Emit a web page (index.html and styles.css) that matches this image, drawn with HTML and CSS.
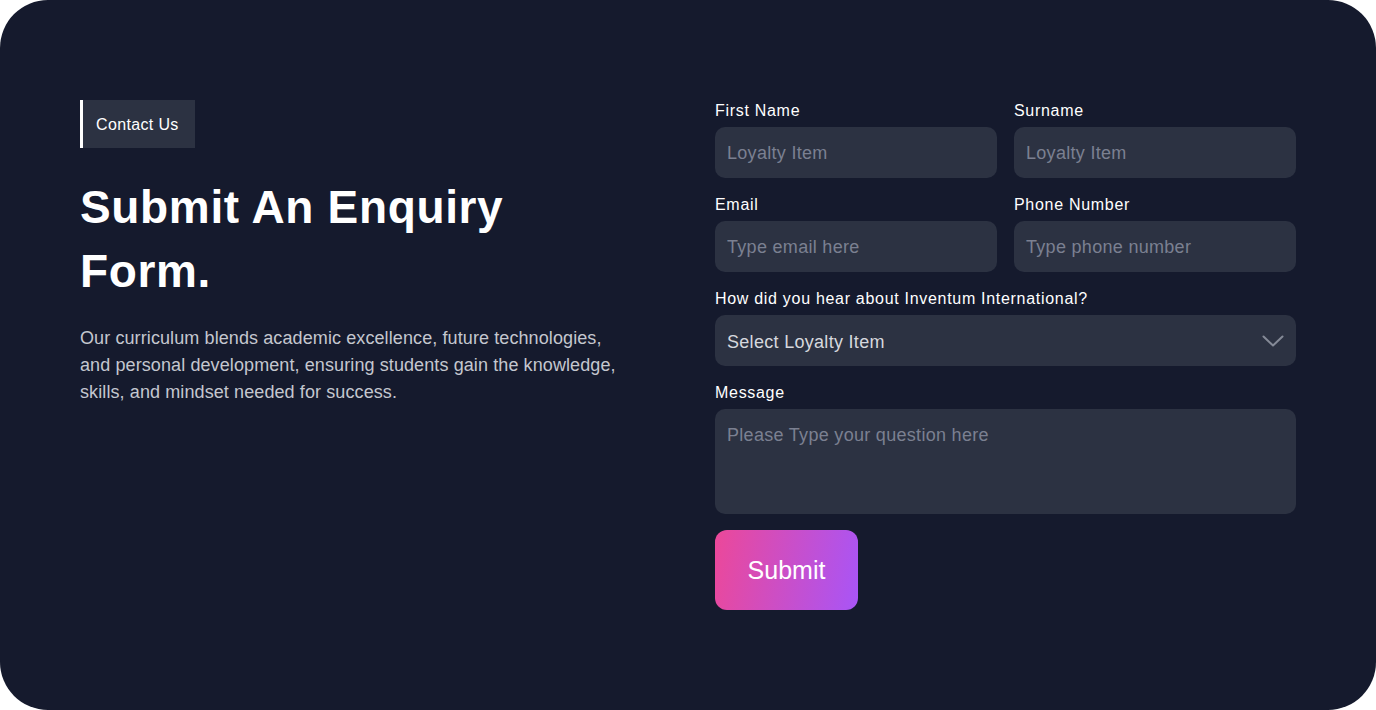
FILE: index.html
```html
<!DOCTYPE html>
<html lang="en">
<head>
<meta charset="utf-8">
<title>Contact Us</title>
<link rel="stylesheet" href="styles.css">
</head>
<body>
<section class="card">
  <div class="intro">
    <div class="badge">Contact Us</div>
    <h1 class="title">Submit An Enquiry Form.</h1>
    <p class="lead">Our curriculum blends academic excellence, future technologies, and personal development, ensuring students gain the knowledge, skills, and mindset needed for success.</p>
  </div>
  <form class="form">
    <div class="row two">
      <label class="field">
        <span class="label">First Name</span>
        <input class="control" type="text" placeholder="Loyalty Item">
      </label>
      <label class="field">
        <span class="label">Surname</span>
        <input class="control" type="text" placeholder="Loyalty Item">
      </label>
    </div>
    <div class="row two">
      <label class="field">
        <span class="label">Email</span>
        <input class="control" type="email" placeholder="Type email here">
      </label>
      <label class="field">
        <span class="label">Phone Number</span>
        <input class="control" type="tel" placeholder="Type phone number">
      </label>
    </div>
    <label class="field">
      <span class="label">How did you hear about Inventum International?</span>
      <span class="select-wrap">
        <select class="control select">
          <option>Select Loyalty Item</option>
        </select>
        <svg class="chevron" width="22" height="12" viewBox="0 0 22 12" aria-hidden="true"><path d="M1.5 1.5 L11 10.5 L20.5 1.5" fill="none" stroke="#858a97" stroke-width="2" stroke-linecap="round" stroke-linejoin="round"/></svg>
      </span>
    </label>
    <label class="field">
      <span class="label">Message</span>
      <textarea class="control textarea" placeholder="Please Type your question here"></textarea>
    </label>
    <div class="actions">
      <button class="submit" type="button">Submit</button>
    </div>
  </form>
</section>
</body>
</html>
```
FILE: styles.css
```css
* { box-sizing: border-box; }
html, body { margin: 0; padding: 0; background: #ffffff; }
body { font-family: "Liberation Sans", Arial, sans-serif; }

.card {
  width: 1376px;
  height: 710px;
  background: #151a2d;
  border-radius: 48px;
  padding: 100px 80px 0 80px;
  display: flex;
  gap: 80px;
}

.intro { flex: 1; min-width: 0; }

.badge {
  display: inline-flex;
  align-items: center;
  height: 48px;
  padding: 1px 16px 0 13px;
  border-left: 3px solid #ffffff;
  background: #2c3242;
  color: #ffffff;
  font-size: 16px;
  letter-spacing: 0.35px;
}

.title {
  margin: 27px 0 0 0;
  color: #ffffff;
  font-size: 46px;
  line-height: 64px;
  font-weight: 700;
  letter-spacing: 0.65px;
}

.lead {
  margin: 22px 0 0 0;
  color: #c4c7cf;
  font-size: 18px;
  line-height: 27px;
  letter-spacing: 0.1px;
}

.form {
  width: 581px;
  flex: none;
  display: flex;
  flex-direction: column;
  gap: 16px;
}

.row.two {
  display: grid;
  grid-template-columns: 1fr 1fr;
  gap: 17px;
}

.field {
  display: flex;
  flex-direction: column;
  gap: 6px;
}

.label {
  color: #ffffff;
  font-size: 16px;
  line-height: 20px;
  padding-top: 1px;
  letter-spacing: 0.7px;
}

.control {
  height: 51px;
  width: 100%;
  border: none;
  outline: none;
  border-radius: 10px;
  background: #2c3242;
  padding: 2px 12px 0 12px;
  font-family: "Liberation Sans", Arial, sans-serif;
  font-size: 18px;
  letter-spacing: 0.3px;
  color: #d6d8de;
}

.control::placeholder { color: #7b8091; opacity: 1; }

.select-wrap { position: relative; display: block; }

.select {
  appearance: none;
  -webkit-appearance: none;
  color: #d6d8de;
}

.chevron {
  position: absolute;
  right: 12px;
  top: 20px;
  pointer-events: none;
}

.textarea {
  height: 105px;
  padding: 16px 12px;
  resize: none;
  line-height: 20px;
}

.actions { display: flex; }

.submit {
  width: 143px;
  height: 80px;
  border: none;
  border-radius: 12px;
  background: linear-gradient(100deg, #ec4899 0%, #a855f7 100%);
  color: #ffffff;
  font-family: "Liberation Sans", Arial, sans-serif;
  font-size: 25px;
  padding-top: 2px;
  cursor: pointer;
}
```
